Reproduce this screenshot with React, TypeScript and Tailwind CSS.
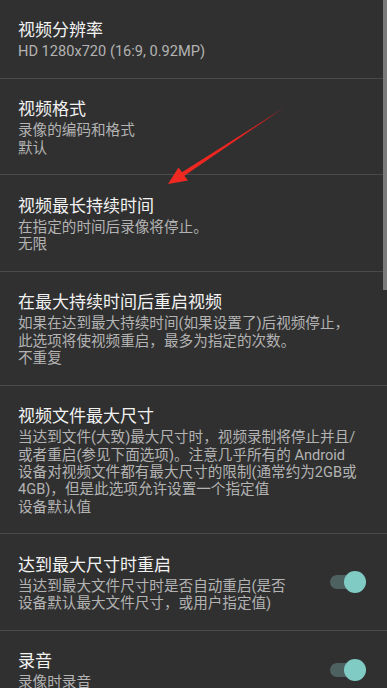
import React from 'react'

type Row = {
  title: string
  lines: string[]
  toggle?: boolean
}

const rows: Row[] = [
  { title: '视频分辨率', lines: ['HD 1280x720 (16:9, 0.92MP)'] },
  { title: '视频格式', lines: ['录像的编码和格式', '默认'] },
  { title: '视频最长持续时间', lines: ['在指定的时间后录像将停止。', '无限'] },
  {
    title: '在最大持续时间后重启视频',
    lines: ['如果在达到最大持续时间(如果设置了)后视频停止，', '此选项将使视频重启，最多为指定的次数。', '不重复'],
  },
  {
    title: '视频文件最大尺寸',
    lines: [
      '当达到文件(大致)最大尺寸时，视频录制将停止并且/',
      '或者重启(参见下面选项)。注意几乎所有的 Android',
      '设备对视频文件都有最大尺寸的限制(通常约为2GB或',
      '4GB)，但是此选项允许设置一个指定值',
      '设备默认值',
    ],
  },
  {
    title: '达到最大尺寸时重启',
    lines: ['当达到最大文件尺寸时是否自动重启(是否', '设备默认最大文件尺寸，或用户指定值)'],
    toggle: true,
  },
  { title: '录音', lines: ['录像时录音'], toggle: true },
]

function Toggle() {
  return (
    <div className="relative w-[36px] h-[22px] mr-[21px] shrink-0">
      <div className="absolute left-0 right-[4px] top-[4px] h-[14px] rounded-full bg-[#4d6260]" />
      <div className="absolute right-0 top-0 w-[22px] h-[22px] rounded-full bg-[#80cbc4]" />
    </div>
  )
}

export default function App() {
  return (
    <div
      className="relative w-[387px] h-[688px] overflow-hidden bg-[#303030]"
      style={{ fontFamily: 'Roboto, "Noto Sans CJK SC", sans-serif' }}
    >
      {rows.map((r, i) => (
        <div
          key={r.title}
          className={`flex items-center border-b border-[#4a4a4a] pl-[18px] ${i === 0 ? 'pt-[17px] pb-[17.5px]' : 'py-[17.5px]'}`}
        >
          <div className="flex-1 min-w-0">
            <div className="text-[17px] leading-[26px] text-[#f2f2f2] whitespace-nowrap">{r.title}</div>
            {r.lines.map(l => (
              <div key={l} className="text-[14.6px] leading-[17.3px] text-[#b3b3b3] whitespace-nowrap">
                {l}
              </div>
            ))}
          </div>
          {r.toggle && <Toggle />}
        </div>
      ))}

      {/* scrollbar */}
      <div className="absolute right-0 top-0 w-[4px] h-[290px] bg-[#7a7a7a]" />

      {/* red arrow */}
      <svg className="absolute left-0 top-0 pointer-events-none" width="387" height="688" viewBox="0 0 387 688">
        <defs>
          <linearGradient id="arr" x1="285" y1="107" x2="168" y2="184" gradientUnits="userSpaceOnUse">
            <stop offset="0" stopColor="#b02020" />
            <stop offset="0.4" stopColor="#e82420" />
            <stop offset="1" stopColor="#f02a22" />
          </linearGradient>
        </defs>
        <polygon
          points="168,184 178.5,167.5 182,172.3 285,107 184.3,175.8 188,180.5"
          fill="url(#arr)"
        />
      </svg>
    </div>
  )
}
